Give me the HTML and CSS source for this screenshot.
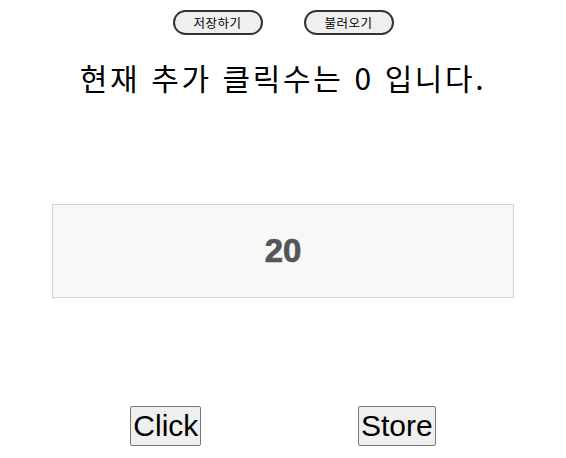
FILE: index.html
```html
<!DOCTYPE html>
<html lang="ko">
<head>
  <meta charset="UTF-8">
  <title>클릭 카운터</title>
  <link rel="stylesheet" href="styles.css">
</head>
<body>
  <div class="top-bar">
    <button class="pill-btn" type="button">저장하기</button>
    <button class="pill-btn" type="button">불러오기</button>
  </div>

  <h1 class="status">현재 추가 클릭수는 <span id="added">0</span> 입니다.</h1>

  <div class="counter-box">
    <span id="count">20</span>
  </div>

  <div class="actions">
    <button class="big-btn" type="button">Click</button>
    <button class="big-btn" type="button">Store</button>
  </div>
</body>
</html>
```

FILE: styles.css
```css
body {
  margin: 0;
  font-family: "Noto Sans CJK KR", "Liberation Sans", sans-serif;
  color: #000;
  background: #fff;
}

.top-bar {
  display: flex;
  justify-content: center;
  gap: 41px;
  padding-top: 10px;
}

.pill-btn {
  width: 90px;
  height: 25px;
  padding: 0;
  border: 2px solid #333;
  border-radius: 13px;
  background: #efefef;
  font-family: "Noto Sans CJK KR", sans-serif;
  font-size: 12.5px;
  letter-spacing: 0.5px;
  color: #000;
}

.status {
  margin: 21px 0 0;
  text-align: center;
  font-size: 30px;
  font-weight: normal;
  line-height: 42px;
  letter-spacing: 2.6px;
}

.counter-box {
  width: 460px;
  height: 92px;
  margin: 106px auto 0;
  border: 1px solid #d3d3d3;
  background: #f8f8f8;
  display: flex;
  align-items: center;
  justify-content: center;
  font-family: "Liberation Sans", Arial, sans-serif;
  font-size: 33px;
  font-weight: bold;
  color: #555;
  -webkit-text-stroke: 0.7px #555;
}

.actions {
  width: 462px;
  margin: 108px auto 0;
  display: flex;
  justify-content: space-around;
}

.big-btn {
  font-family: "Liberation Sans", Arial, sans-serif;
  font-size: 30px;
  padding: 2px 2px;
  border: 1px solid #767676;
  border-radius: 2px;
  background: #efefef;
  color: #000;
}
```
